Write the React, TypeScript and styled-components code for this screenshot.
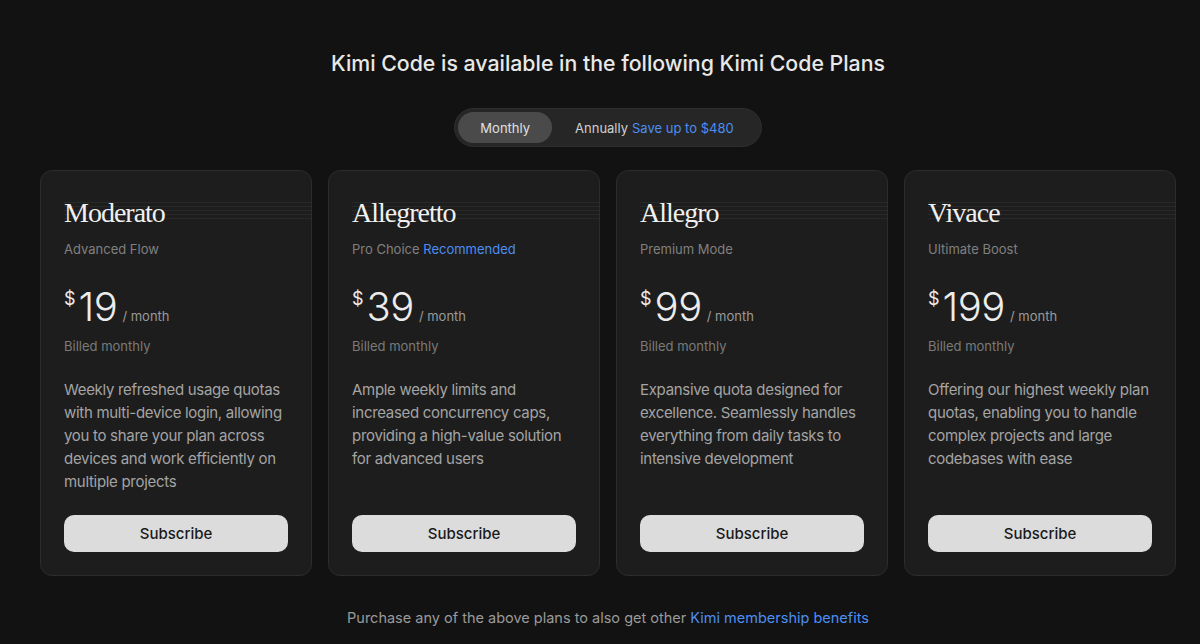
import styled, { createGlobalStyle } from "styled-components";

interface Plan {
    name: string;
    tagline: string;
    badge?: string;
    price: number;
    description: string;
}

const plans: Plan[] = [
    {
        name: "Moderato",
        tagline: "Advanced Flow",
        price: 19,
        description: "Weekly refreshed usage quotas with multi-device login, allowing you to share your plan across devices and work efficiently on multiple projects",
    },
    {
        name: "Allegretto",
        tagline: "Pro Choice",
        badge: "Recommended",
        price: 39,
        description: "Ample weekly limits and increased concurrency caps, providing a high-value solution for advanced users",
    },
    {
        name: "Allegro",
        tagline: "Premium Mode",
        price: 99,
        description: "Expansive quota designed for excellence. Seamlessly handles everything from daily tasks to intensive development",
    },
    {
        name: "Vivace",
        tagline: "Ultimate Boost",
        price: 199,
        description: "Offering our highest weekly plan quotas, enabling you to handle complex projects and large codebases with ease",
    },
];

const App = () => {
    return (
        <>
            <GlobalStyle />
            <StyledPage>
                <StyledHeading>Kimi Code is available in the following Kimi Code Plans</StyledHeading>
                <StyledToggle>
                    <StyledToggleOption active>Monthly</StyledToggleOption>
                    <StyledToggleOption>
                        Annually <StyledBlue>Save up to $480</StyledBlue>
                    </StyledToggleOption>
                </StyledToggle>
                <StyledGrid>
                    {plans.map((plan) => (
                        <StyledCard key={plan.name}>
                            <StyledTitleRow>
                                <StyledPlanName>{plan.name}</StyledPlanName>
                            </StyledTitleRow>
                            <StyledTagline>
                                {plan.tagline}
                                {plan.badge && <StyledBlue> {plan.badge}</StyledBlue>}
                            </StyledTagline>
                            <StyledPriceRow>
                                <StyledCurrency>$</StyledCurrency>
                                <StyledAmount>{plan.price}</StyledAmount>
                                <StyledPeriod>/ month</StyledPeriod>
                            </StyledPriceRow>
                            <StyledBilled>Billed monthly</StyledBilled>
                            <StyledDescription>{plan.description}</StyledDescription>
                            <StyledButton>Subscribe</StyledButton>
                        </StyledCard>
                    ))}
                </StyledGrid>
                <StyledFooter>
                    Purchase any of the above plans to also get other <StyledBlue>Kimi membership benefits</StyledBlue>
                </StyledFooter>
            </StyledPage>
        </>
    )
}

const GlobalStyle = createGlobalStyle`
    body {
        margin: 0;
        background: #121212;
        font-family: Inter, "Noto Sans", sans-serif;
        -webkit-font-smoothing: antialiased;
    }
`

const StyledPage = styled.main`
    display: flex;
    flex-direction: column;
    align-items: center;
    padding: 48px 0 0 16px;
    height: 644px;
    box-sizing: border-box;
    overflow: hidden;
`

const StyledHeading = styled.h1`
    margin: 0;
    font-size: 21.3px;
    line-height: 30px;
    font-weight: 500;
    color: #e8e8e8;
`

const StyledToggle = styled.div`
    display: flex;
    align-items: center;
    margin-top: 30px;
    padding: 3px;
    height: 39px;
    box-sizing: border-box;
    border-radius: 20px;
    background: #262626;
    border: 1px solid #2e2e2e;
`

const StyledToggleOption = styled.div<{ active?: boolean }>`
    display: flex;
    align-items: center;
    gap: 4px;
    height: 100%;
    padding: ${(p) => (p.active ? "0 22px" : "0 24px 0 23px")};
    border-radius: 16px;
    font-size: 13px;
    color: ${(p) => (p.active ? "#e0e0e0" : "#d0d0d0")};
    background: ${(p) => (p.active ? "#4a4a4a" : "transparent")};
`

const StyledBlue = styled.span`
    color: #4c8ef2;
`

const StyledGrid = styled.div`
    display: grid;
    grid-template-columns: repeat(4, 272px);
    gap: 16px;
    margin-top: 23px;
`

const StyledCard = styled.div`
    display: flex;
    flex-direction: column;
    height: 406px;
    box-sizing: border-box;
    padding: 26px 23px 23px;
    border: 1px solid #2c2c2c;
    border-radius: 12px;
    background: #1d1d1d;
`

const StyledTitleRow = styled.div`
    height: 32px;
    margin-right: -23px;
    background:
        repeating-linear-gradient(
            to bottom,
            transparent 0px,
            transparent 3px,
            rgba(255, 255, 255, 0.05) 3px,
            rgba(255, 255, 255, 0.05) 4px
        ) 0 2px / 100% 22px no-repeat;
`

const StyledPlanName = styled.h2`
    margin: 0;
    font-family: "Liberation Serif", "DejaVu Serif", serif;
    font-size: 28px;
    line-height: 32px;
    font-weight: 400;
    letter-spacing: -1px;
    color: #f0f0f0;
`

const StyledTagline = styled.div`
    margin-top: 11px;
    font-size: 13px;
    line-height: 18px;
    color: #808080;
`

const StyledPriceRow = styled.div`
    display: flex;
    align-items: baseline;
    margin-top: 25px;
    color: #ececec;
`

const StyledCurrency = styled.span`
    align-self: flex-start;
    margin-top: 6px;
    margin-right: 3px;
    font-size: 18px;
    line-height: 20px;
`

const StyledAmount = styled.span`
    font-size: 40px;
    line-height: 48px;
    font-weight: 300;
    letter-spacing: -0.5px;
`

const StyledPeriod = styled.span`
    margin-left: 5px;
    font-size: 13px;
    color: #9a9a9a;
`

const StyledBilled = styled.div`
    margin-top: 6px;
    font-size: 13px;
    line-height: 18px;
    color: #7a7a7a;
`

const StyledDescription = styled.p`
    margin: 23px 0 0;
    font-size: 15px;
    line-height: 23px;
    letter-spacing: -0.3px;
    color: #a4a4a4;
`

const StyledButton = styled.button`
    margin-top: auto;
    height: 37px;
    border: none;
    border-radius: 10px;
    background: #dcdcdc;
    font-family: inherit;
    font-size: 15px;
    font-weight: 500;
    color: #1a1a1a;
    cursor: pointer;
`

const StyledFooter = styled.p`
    margin: 32px 0 0;
    font-size: 14.5px;
    line-height: 20px;
    color: #9a9a9a;
`

export default App
